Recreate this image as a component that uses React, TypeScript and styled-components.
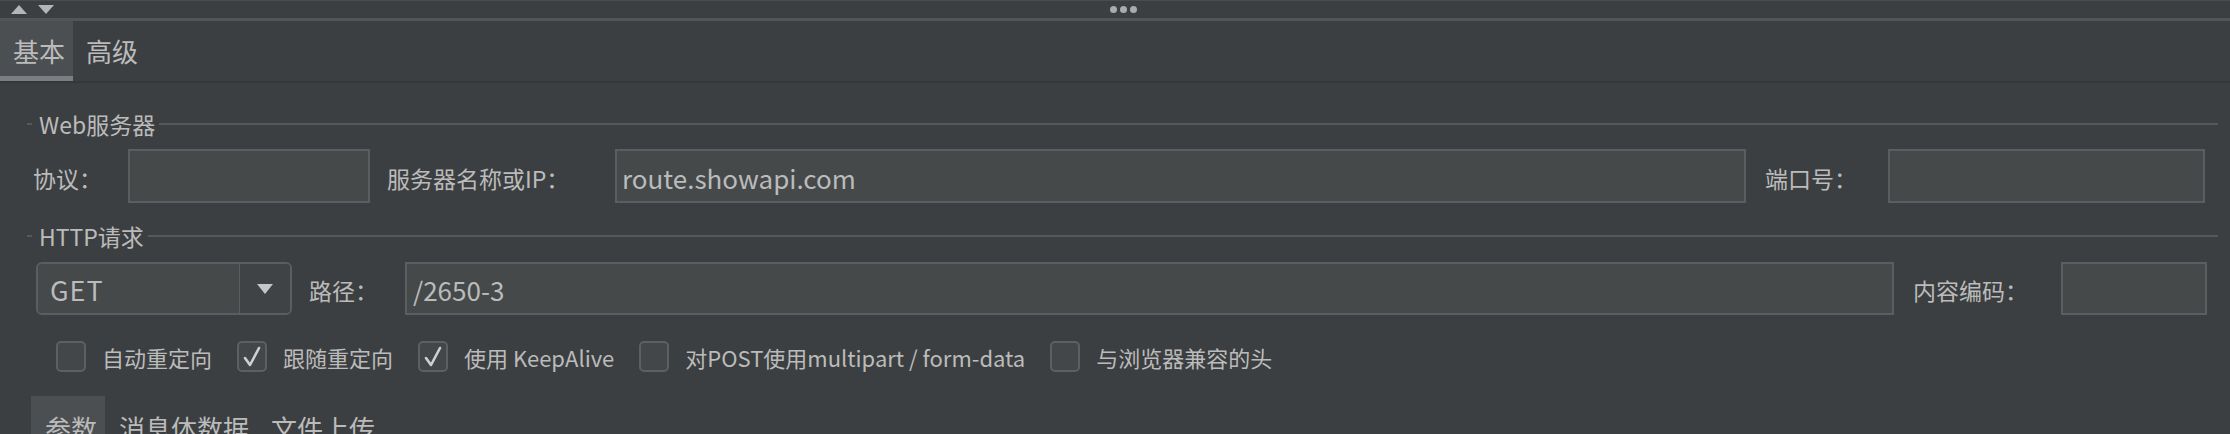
import React from "react";
import styled, { createGlobalStyle } from "styled-components";

const Global = createGlobalStyle`
  html, body { margin: 0; padding: 0; background: #3c3f41; }
  body {
    width: 2230px; height: 434px; overflow: hidden;
    font-family: "Noto Sans CJK SC", "Noto Sans", sans-serif;
    color: #bbbbbb;
  }
  * { box-sizing: border-box; }
`;

const Root = styled.div`
  width: 2230px;
  height: 434px;
  overflow: hidden;
  background: #3c3f41;
  display: flex;
  flex-direction: column;
  & > * { flex-shrink: 0; }
`;

const TopBar = styled.div`
  height: 18px;
  border-top: 1px solid #4a4d50;
  display: grid;
  grid-template-columns: 1fr auto 1fr;
  align-items: center;
  padding-left: 11px;
`;

const Arrows = styled.div`
  display: flex;
  gap: 11px;
  align-items: center;
`;

const Grip = styled.div`
  display: flex;
  gap: 3px;
  margin-left: 6px;
`;

const Dot = styled.span`
  width: 7px;
  height: 7px;
  border-radius: 50%;
  background: #a9abad;
`;

const Divider = styled.div`
  height: 3px;
  background: #525558;
`;

const TabBar = styled.div<{ $h: number }>`
  display: flex;
  height: ${(p) => p.$h}px;
`;

const Tab = styled.div<{ $active?: boolean; $pl: number; $pr: number; $indicator?: boolean }>`
  display: flex;
  align-items: center;
  padding: 0 ${(p) => p.$pr}px 0 ${(p) => p.$pl}px;
  font-size: 26px;
  line-height: 1;
  color: #bbbbbb;
  background: ${(p) => (p.$active ? "#4b4f52" : "transparent")};
  border-bottom: ${(p) => (p.$indicator ? (p.$active ? "5px solid #7b7f83" : "5px solid transparent") : "none")};
  padding-top: ${(p) => (p.$indicator ? 5 : 0)}px;
`;

const TabLine = styled.div`
  height: 2px;
  background: #35383a;
`;

const Content = styled.div`
  padding: 29px 12px 0 27px;
  display: flex;
  flex-direction: column;
  & > * { flex-shrink: 0; }
`;

const Legend = styled.div<{ $mt: number }>`
  display: flex;
  align-items: center;
  height: 24px;
  margin-top: ${(p) => p.$mt}px;
  font-size: 23px;
  line-height: 1;
`;

const LegendLead = styled.span`
  width: 5px;
  height: 2px;
  background: #56595c;
  margin-right: 7px;
`;

const LegendLine = styled.span`
  flex: 1;
  height: 2px;
  background: #56595c;
  margin-left: 4px;
`;

const FieldRow = styled.div<{ $cols: string; $pl: number; $pr: number; $mt: number; $h: number }>`
  display: grid;
  grid-template-columns: ${(p) => p.$cols};
  align-items: stretch;
  height: ${(p) => p.$h}px;
  margin-top: ${(p) => p.$mt}px;
  padding-left: ${(p) => p.$pl}px;
  padding-right: ${(p) => p.$pr}px;
`;

const Label = styled.span<{ $lead?: number }>`
  display: flex;
  align-items: center;
  padding-left: ${(p) => p.$lead ?? 0}px;
  font-size: 23px;
  white-space: nowrap;
  padding-top: 3px;
`;

const Input = styled.div<{ $pl?: number }>`
  display: flex;
  align-items: center;
  background: #45494a;
  border: 2px solid #5b5e61;
  padding-left: ${(p) => p.$pl ?? 6}px;
  font-size: 26px;
  color: #bbbbbb;
  white-space: nowrap;
  overflow: hidden;
  padding-top: 2px;
`;

const Combo = styled.div`
  display: grid;
  grid-template-columns: 1fr 51px;
  border: 2px solid #5b5e61;
  border-radius: 6px;
  overflow: hidden;
`;

const ComboText = styled.div`
  display: flex;
  align-items: center;
  padding-left: 12px;
  padding-top: 2px;
  background: #45494a;
  font-size: 27px;
  letter-spacing: 1px;
`;

const ComboButton = styled.div`
  display: flex;
  align-items: center;
  justify-content: center;
  background: #3f4345;
  border-left: 1px solid #5b5e61;
`;

const CheckRow = styled.div`
  display: flex;
  align-items: center;
  gap: 25px;
  margin-top: 26px;
  height: 31px;
  padding-left: 29px;
`;

const CheckItem = styled.div`
  display: flex;
  align-items: center;
  gap: 16px;
`;

const Box = styled.span`
  width: 30px;
  height: 31px;
  border: 2px solid #5c6063;
  border-radius: 5px;
  background: #43474a;
  display: flex;
  align-items: center;
  justify-content: center;
`;

const CheckLabel = styled.span`
  font-size: 22px;
  line-height: 1;
  white-space: nowrap;
  padding-top: 1px;
`;

const BottomTabs = styled.div`
  display: flex;
  height: 64px;
  margin-top: 24px;
  padding-left: 4px;
`;

const Check = ({ on }: { on?: boolean }) => (
  <Box>
    {on && (
      <svg width="20" height="22" viewBox="0 0 20 22">
        <polyline points="3,12 8,19 17,2" fill="none" stroke="#cfcfcf" strokeWidth="2.6" strokeLinecap="round" strokeLinejoin="round" />
      </svg>
    )}
  </Box>
);

const Up = () => (
  <svg width="16" height="9" viewBox="0 0 16 9">
    <polygon points="8,0 16,9 0,9" fill="#b3b5b7" />
  </svg>
);
const Down = () => (
  <svg width="16" height="9" viewBox="0 0 16 9">
    <polygon points="0,0 16,0 8,9" fill="#b3b5b7" />
  </svg>
);

export default function App() {
  return (
    <Root>
      <Global />
      <TopBar>
        <Arrows>
          <Up />
          <Down />
        </Arrows>
        <Grip>
          <Dot />
          <Dot />
          <Dot />
        </Grip>
        <span />
      </TopBar>
      <Divider />
      <TabBar $h={60}>
        <Tab $active $pl={13} $pr={8} $indicator>基本</Tab>
        <Tab $pl={13} $pr={8} $indicator>高级</Tab>
      </TabBar>
      <TabLine />
      <Content>
        <Legend $mt={0}>
          <LegendLead />
          Web服务器
          <LegendLine />
        </Legend>
        <FieldRow $cols="95px 242px 245px 1fr 142px 317px" $pl={6} $pr={13} $mt={13} $h={54}>
          <Label>协议：</Label>
          <Input />
          <Label $lead={17}>服务器名称或IP：</Label>
          <Input $pl={5}>route.showapi.com</Input>
          <Label $lead={19}>端口号：</Label>
          <Input />
        </FieldRow>
        <Legend $mt={21}>
          <LegendLead />
          HTTP请求
          <LegendLine />
        </Legend>
        <FieldRow $cols="256px 113px 1fr 167px 146px" $pl={9} $pr={11} $mt={14} $h={53}>
          <Combo>
            <ComboText>GET</ComboText>
            <ComboButton>
              <svg width="16" height="10" viewBox="0 0 16 10">
                <polygon points="0,0 16,0 8,10" fill="#c4c6c8" />
              </svg>
            </ComboButton>
          </Combo>
          <Label $lead={17}>路径：</Label>
          <Input $pl={6}>/2650-3</Input>
          <Label $lead={19}>内容编码：</Label>
          <Input />
        </FieldRow>
        <CheckRow>
          <CheckItem>
            <Check />
            <CheckLabel>自动重定向</CheckLabel>
          </CheckItem>
          <CheckItem>
            <Check on />
            <CheckLabel>跟随重定向</CheckLabel>
          </CheckItem>
          <CheckItem>
            <Check on />
            <CheckLabel>使用 KeepAlive</CheckLabel>
          </CheckItem>
          <CheckItem>
            <Check />
            <CheckLabel>对POST使用multipart / form-data</CheckLabel>
          </CheckItem>
          <CheckItem>
            <Check />
            <CheckLabel>与浏览器兼容的头</CheckLabel>
          </CheckItem>
        </CheckRow>
        <BottomTabs>
          <Tab $active $pl={14} $pr={8}>参数</Tab>
          <Tab $pl={14} $pr={8}>消息体数据</Tab>
          <Tab $pl={14} $pr={8}>文件上传</Tab>
        </BottomTabs>
      </Content>
    </Root>
  );
}
